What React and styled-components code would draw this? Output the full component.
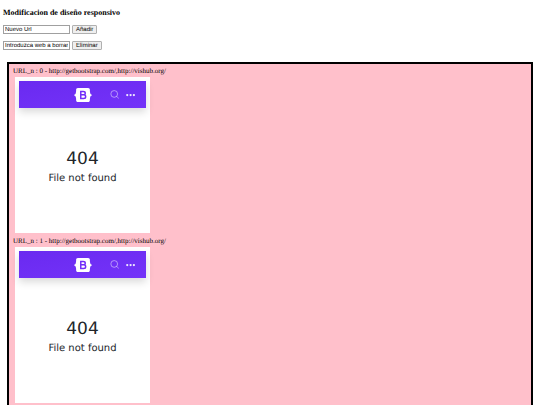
import styled, { createGlobalStyle } from "styled-components";

const GlobalStyle = createGlobalStyle`
  body {
    margin: 0;
    background: #fff;
    color: #000;
    font-family: "Liberation Serif", "Times New Roman", serif;
    font-size: 7px;
    line-height: 8px;
  }

  body, input, button {
    text-rendering: geometricPrecision;
  }
`;

const Page = styled.main`
  padding: 8px 3px;
`;

const Title = styled.h1`
  margin: 0 0 7px;
  font-size: 8px;
  line-height: 10px;
`;

const Form = styled.form`
  display: flex;
  align-items: center;
  gap: 2px;
  margin-bottom: 7px;
`;

const TextInput = styled.input`
  box-sizing: border-box;
  width: 67px;
  height: 9px;
  padding: 0 1px;
  border: 1px solid #a0a0a0;
  background: #fff;
  color: #000;
  font: 6px "Liberation Sans", Arial, sans-serif;
`;

const Button = styled.button`
  box-sizing: border-box;
  height: 9px;
  padding: 1px 3px 0;
  border: 1px solid #b0b0b0;
  border-radius: 1px;
  background: #efefef;
  color: #000;
  font: 6px/6px "Liberation Sans", Arial, sans-serif;
`;

const Panel = styled.section`
  margin: 12px 4px 0;
  padding: 3px 4px;
  border: 2px solid #000;
  background: pink;
`;

const Site = styled.article`
  margin-bottom: 4px;
`;

const SiteLabel = styled.p`
  margin: 0 0 2px;
`;

const Frame = styled.div`
  box-sizing: border-box;
  width: 135px;
  height: 156px;
  margin-left: 2px;
  padding: 4px;
  background: #fff;
`;

const Navbar = styled.header`
  display: flex;
  align-items: center;
  justify-content: flex-end;
  height: 27px;
  padding-right: 11px;
  background: linear-gradient(170deg, #6a2af0, #7433f9);
  box-shadow: 0 4px 8px rgba(0, 0, 0, 0.15);
`;

const Logo = styled.svg`
  width: 18px;
  height: 14px;
  margin-right: 18px;
`;

const NavIcon = styled.svg`
  width: 9px;
  height: 9px;
  margin-left: ${({ $gap }) => $gap || "0"};
`;

const NotFound = styled.div`
  margin-top: 41px;
  color: #212529;
  font-family: "DejaVu Sans", sans-serif;
  text-align: center;
`;

const Code = styled.h2`
  margin: 0;
  font-size: 17px;
  font-weight: 400;
  line-height: 20px;
`;

const Message = styled.p`
  margin: 0;
  font-size: 10px;
  line-height: 20px;
`;

const sites = [
  { id: 0, urls: "http://getbootstrap.com/,http://vishub.org/" },
  { id: 1, urls: "http://getbootstrap.com/,http://vishub.org/" },
];

const BootstrapLogo = () => (
  <Logo viewBox="0 0 118 94" role="img" aria-label="Bootstrap">
    <path
      fill="#fff"
      d="M24.500 0C17.700 0 12.700 6 12.900 12.400c.2 6.200-.1 14.300-2.100 20.800C8.800 39.800 5.400 44 0 44.500v5.800c5.400.5 8.800 4.700 10.800 11.300 2 6.500 2.300 14.600 2.100 20.800C12.700 88.800 17.700 94.800 24.500 94.800h69c6.800 0 11.800-6 11.600-12.400-.2-6.200.1-14.300 2.100-20.800 2-6.600 5.400-10.800 10.800-11.300v-5.800c-5.400-.5-8.800-4.700-10.800-11.300-2-6.500-2.300-14.600-2.100-20.800C105.300 6 100.300 0 93.500 0z"
    />
    <path
      fill="none"
      stroke="#712cf9"
      strokeWidth="10"
      d="M44 24v46h19c9 0 14-4 14-12s-5-12-14-12H44h17c8 0 13-4 13-11s-5-11-13-11z"
    />
  </Logo>
);

const SearchIcon = () => (
  <NavIcon viewBox="0 0 16 16" aria-hidden="true">
    <g fill="none" stroke="#fff" strokeOpacity="0.65" strokeWidth="1.3">
      <circle cx="7.500" cy="7" r="6" />
      <path d="m11.700 11.200 4.200 4.200" />
    </g>
  </NavIcon>
);

const DotsIcon = () => (
  <NavIcon $gap="7px" viewBox="0 0 16 16" aria-hidden="true">
    <g fill="#fff" fillOpacity="0.9">
      <circle cx="2.200" cy="9" r="2" />
      <circle cx="8.200" cy="9" r="2" />
      <circle cx="14" cy="9" r="2" />
    </g>
  </NavIcon>
);

const SitePreview = ({ id, urls }) => (
  <Site>
    <SiteLabel>
      URL_n : {id} - {urls}
    </SiteLabel>
    <Frame>
      <Navbar>
        <BootstrapLogo />
        <SearchIcon />
        <DotsIcon />
      </Navbar>
      <NotFound>
        <Code>404</Code>
        <Message>File not found</Message>
      </NotFound>
    </Frame>
  </Site>
);

const App = () => (
  <>
    <GlobalStyle />
    <Page>
      <Title>Modificacion de diseño responsivo</Title>
      <Form onSubmit={(event) => event.preventDefault()}>
        <TextInput aria-label="Nuevo Url" defaultValue="Nuevo Url" />
        <Button>Añadir</Button>
      </Form>
      <Form onSubmit={(event) => event.preventDefault()}>
        <TextInput
          aria-label="Introduzca web a borrar"
          defaultValue="Introduzca web a borrar"
        />
        <Button>Eliminar</Button>
      </Form>
      <Panel>
        {sites.map(({ id, urls }) => (
          <SitePreview key={id} id={id} urls={urls} />
        ))}
      </Panel>
    </Page>
  </>
);

export default App;
